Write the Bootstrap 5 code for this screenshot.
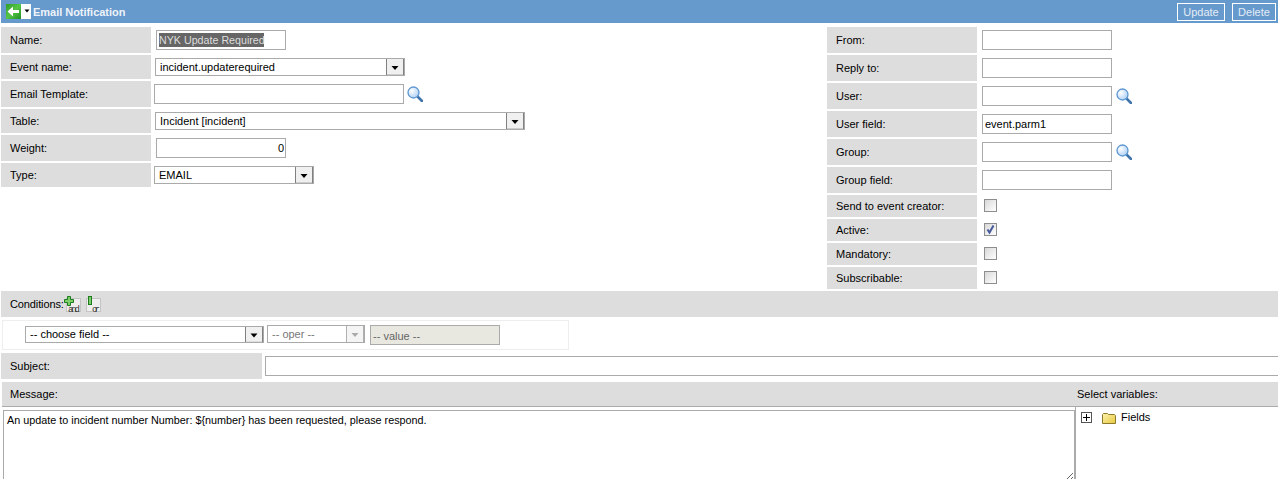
<!DOCTYPE html>
<html lang="en"><head><meta charset="utf-8"><title>Email Notification</title>
<link href="https://cdn.jsdelivr.net/npm/bootstrap@5.3.0/dist/css/bootstrap.min.css" rel="stylesheet">
<style>
html,body{height:479px;overflow:hidden}
body{font:11px/14px "Liberation Sans",Arial,sans-serif;color:#000;background:#fff;padding:0 0 0 1px}
.hdr{height:23px;background:#6699cc;color:#fff;font-weight:700;padding:0 2px 0 5px;margin-bottom:4px}
.hdr .ttl{font-size:11px;margin-left:2px;color:#eef3f9;letter-spacing:-.03px}
.backbtn{display:flex;align-items:center;background:#fff;height:15px;width:25px}
.hbtn{background:#6699cc;color:#e4edf6;border:1px solid #fff;border-radius:0;font:11px/14px "Liberation Sans",Arial,sans-serif;height:18px;padding:0;margin-left:7px}
.hb-up{width:48px}
.hb-del{width:44px}
.frmleft{width:826px}
.frmright{width:451px}
.frow{display:flex;align-items:center;margin-bottom:2px}
.lbl{background:#ddd;width:150px;height:26px;padding-left:9px;line-height:26px;flex:none}
.h24 .lbl{height:24px;line-height:24px}
.h22 .lbl{height:22px;line-height:22px}
.fld{border:1px solid #aaa;height:20px;font:11px/14px "Liberation Sans",Arial,sans-serif;padding:0 2px;color:#000;background:#fff;border-radius:0;outline:0}
.picked{color:#ddd;font-size:10.7px;background:#fff linear-gradient(#666,#666) no-repeat 2px 2px/105px 14px;width:130px;margin-left:5px;padding-left:2px}
.w130{width:130px;margin-left:5px}
.weight{width:130px;margin-left:5px;text-align:right;padding-right:1px}
.pick{appearance:none;-webkit-appearance:none;border:1px solid #aaa;height:18px;font:11px/14px "Liberation Sans",Arial,sans-serif;padding:0 20px 0 4px;background:#fff url("data:image/svg+xml,%3Csvg xmlns='http://www.w3.org/2000/svg' width='18' height='18'%3E%3Crect x='.5' y='.5' width='17' height='17' fill='%23f0f0f0' stroke='%23808080'/%3E%3Crect x='1' y='16' width='16' height='1' fill='%23ccc'/%3E%3Cpath d='M5.500 8h7l-3.500 4z' fill='%23000'/%3E%3C/svg%3E") no-repeat right center;border-radius:0;color:#000}
.evt{width:250px;margin-left:4px}
.tbl{width:370px;margin-left:4px}
.typ{width:160px;margin-left:3px}
.tmpl{width:250px;margin-left:3px;height:20px}
.glass{flex:none;margin-left:4px}
.glass-l{margin-left:3px}
.chk{appearance:none;-webkit-appearance:none;width:13px;height:13px;border:1px solid #8e8e8e;margin:0 0 2px 7px;background:linear-gradient(135deg,#d8d8d8,#fff);display:block;border-radius:0}
.chkon{background:url("data:image/svg+xml,%3Csvg xmlns='http://www.w3.org/2000/svg' width='11' height='11'%3E%3Cpath d='M2.500 5.500l2 3 4-7' fill='none' stroke='%23485a9c' stroke-width='2'/%3E%3C/svg%3E") center no-repeat,linear-gradient(135deg,#d8d8d8,#fff)}
.condbar{background:#ddd;height:26px;padding-left:9px;align-items:center}
.condtxt{letter-spacing:-.12px}
.adds{margin:1px 0 0 0;flex:none}
.filt{border:1px solid #eee;width:567px;height:30px;margin:3px 0 3px 1px;padding-left:22px}
.fieldsel{width:239px;height:17px;margin-top:-2px}
.opersel{width:98px;height:18px;margin:-2px 0 0 3px;color:#777;background-color:#fff;background-image:url("data:image/svg+xml,%3Csvg xmlns='http://www.w3.org/2000/svg' width='18' height='18'%3E%3Crect x='.5' y='.5' width='17' height='17' fill='%23f4f4f4' stroke='%23b0b0b0'/%3E%3Cpath d='M5.500 8h7l-3.500 4z' fill='%23aaa'/%3E%3C/svg%3E")}
.valbox{width:130px;height:20px;border:1px solid #aaa;background:#e9e8e0;color:#666;line-height:20px;padding-left:2px;margin-left:5px}
.subjlbl{width:261px}
.subjfld{flex:1;margin-left:3px;margin-right:-2px}
.frow.subjrow{margin-bottom:3px}
.msgbar{background:#ddd;height:25px;margin-left:1px;border-bottom:1px solid #aaa;line-height:24px;padding-left:8px}
.varlbl{width:201px}
.msgarea{height:72px;overflow:hidden}
.msgtxt{width:1072px;height:72px;margin:3px 0 0 2px;border:1px solid #aaa;font:10.8px/14px "Liberation Sans",Arial,sans-serif;padding:2px 3px;resize:both;border-radius:0;outline:0;display:block;overflow:hidden}
.treeside{flex:1;border-left:1px solid #aaa;margin-left:0;padding:5px 0 0 5px;gap:10px;line-height:11px;height:72px}
.plusbox{width:11px;height:11px;border:1px solid #555;flex:none}
.leaf-name{margin-left:-5px}
</style></head><body>
<div class="hdr d-flex align-items-center">
 <span class="backbtn">
  <svg width="25" height="15" viewBox="0 0 25 15"><defs><linearGradient id="gr" x1="0" y1="0" x2="1" y2="1"><stop offset="0" stop-color="#2f9d2a"/><stop offset=".5" stop-color="#55c646"/><stop offset="1" stop-color="#1f8f25"/></linearGradient></defs><rect width="15" height="15" fill="url(#gr)"/><path d="M1.500 7.500L7 2.500V6h6v3H7v3.500z" fill="#fff"/><path d="M18.500 5.500h5l-2.500 3z" fill="#000"/></svg>
 </span>
 <span class="ttl">Email Notification</span>
 <span class="ms-auto d-flex">
  <button type="button" class="hbtn hb-up">Update</button>
  <button type="button" class="hbtn hb-del">Delete</button>
 </span>
</div>
<div class="d-flex">
 <div class="frmleft">
  <div class="frow"><span class="lbl">Name:</span><input class="fld picked" value="NYK Update Required"></div>
  <div class="frow h24"><span class="lbl">Event name:</span><select class="pick evt"><option>incident.updaterequired</option></select></div>
  <div class="frow"><span class="lbl">Email Template:</span><input class="fld tmpl"><svg class="glass glass-l" width="16" height="16" viewBox="0 0 16 16"><use href="#mag"/></svg></div>
  <div class="frow h24"><span class="lbl">Table:</span><select class="pick tbl"><option>Incident [incident]</option></select></div>
  <div class="frow"><span class="lbl">Weight:</span><input class="fld weight" value="0"></div>
  <div class="frow h24"><span class="lbl">Type:</span><select class="pick typ"><option>EMAIL</option></select></div>
 </div>
 <div class="frmright">
  <div class="frow"><span class="lbl">From:</span><input class="fld w130"></div>
  <div class="frow"><span class="lbl">Reply to:</span><input class="fld w130"></div>
  <div class="frow"><span class="lbl">User:</span><input class="fld w130"><svg class="glass" width="16" height="16" viewBox="0 0 16 16"><use href="#mag"/></svg></div>
  <div class="frow"><span class="lbl">User field:</span><input class="fld w130" value="event.parm1"></div>
  <div class="frow"><span class="lbl">Group:</span><input class="fld w130"><svg class="glass" width="16" height="16" viewBox="0 0 16 16"><use href="#mag"/></svg></div>
  <div class="frow"><span class="lbl">Group field:</span><input class="fld w130"></div>
  <div class="frow h22"><span class="lbl">Send to event creator:</span><input type="checkbox" class="chk"></div>
  <div class="frow h22"><span class="lbl">Active:</span><input type="checkbox" class="chk chkon" checked></div>
  <div class="frow h22"><span class="lbl">Mandatory:</span><input type="checkbox" class="chk"></div>
  <div class="frow h22"><span class="lbl">Subscribable:</span><input type="checkbox" class="chk"></div>
 </div>
</div>
<div class="condbar d-flex"><span class="condtxt">Conditions:</span><svg class="adds" width="38" height="17" viewBox="0 0 38 17">
  <rect x="2.500" y="2.500" width="14" height="13" fill="#eee" stroke="#c4c4c4"/><path d="M3.500 3.500v-3h3v3h3v3h-3v3h-3v-3h-3v-3z" transform="translate(0 0)" fill="#7ccf6a" stroke="#1d7a1d"/>
  <text x="4" y="15.500" font-size="9" font-family="Liberation Mono" fill="#333" textLength="12">and</text>
  <rect x="22.500" y="2.500" width="14" height="13" fill="#eee" stroke="#c4c4c4"/><rect x="24.500" y=".5" width="3" height="8" fill="#7ccf6a" stroke="#1d7a1d"/>
  <text x="28" y="15.500" font-size="9" font-family="Liberation Mono" fill="#333" textLength="8">or</text>
 </svg></div>
<div class="filt d-flex align-items-center">
 <select class="pick fieldsel"><option>-- choose field --</option></select>
 <select class="pick opersel" disabled><option>-- oper --</option></select>
 <span class="valbox">-- value --</span>
</div>
<div class="frow subjrow"><span class="lbl subjlbl">Subject:</span><input class="fld subjfld"></div>
<div class="msgbar d-flex justify-content-between"><span>Message:</span><span class="varlbl">Select variables:</span></div>
<div class="msgarea d-flex">
 <textarea class="msgtxt flex-none">An update to incident number Number: ${number} has been requested, please respond.</textarea>
 <div class="treeside d-flex align-items-start">
  <span class="plusbox"><svg class="d-block" width="9" height="9" viewBox="0 0 9 9"><path d="M1 4.500h7M4.500 1v7" stroke="#000"/></svg></span>
  <svg width="14" height="12" viewBox="0 0 14 12" class="flex-none"><defs><linearGradient id="fo" x1="0" y1="0" x2="1" y2="1"><stop offset="0" stop-color="#fdf3b0"/><stop offset="1" stop-color="#e8c83e"/></linearGradient></defs><path d="M.5 11.500v-9l1-1h4l1 1h6l1 1v8z" fill="url(#fo)" stroke="#8d7a2a"/></svg>
  <span class="leaf-name">Fields</span>
 </div>
</div>
<svg width="0" height="0" class="position-absolute"><defs><radialGradient id="lens" cx=".35" cy=".35" r=".75"><stop offset="0" stop-color="#fff"/><stop offset="1" stop-color="#a9cdf5"/></radialGradient><g id="mag"><path d="M10 10l5 5" stroke="#3f74ad" stroke-width="2.600" stroke-linecap="round"/><circle cx="6.500" cy="6.500" r="5.500" fill="url(#lens)" stroke="#5f97d1" stroke-width="1.300"/></g></defs></svg>
</body></html>
